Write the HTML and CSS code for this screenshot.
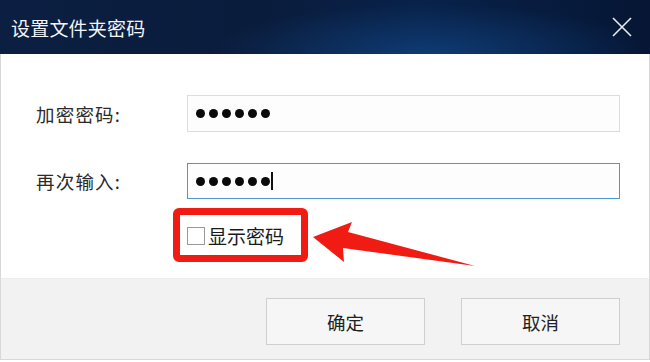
FILE: index.html
```html
<!DOCTYPE html>
<html lang="zh-CN">
<head>
<meta charset="utf-8">
<title>设置文件夹密码</title>
<link rel="stylesheet" href="styles.css">
</head>
<body>
<div class="dialog">
  <div class="titlebar">
    <span class="title">设置文件夹密码</span>
    <svg class="close" width="20" height="20" viewBox="0 0 20 20"><path d="M1 1 L19 19 M19 1 L1 19" stroke="#e8ecf2" stroke-width="1.6" fill="none"/></svg>
  </div>
  <div class="content">
    <div class="row">
      <span class="label">加密密码:</span>
      <div class="input">
        <span class="dots"><i></i><i></i><i></i><i></i><i></i><i></i></span>
      </div>
    </div>
    <div class="row">
      <span class="label">再次输入:</span>
      <div class="input focus">
        <span class="dots"><i></i><i></i><i></i><i></i><i></i><i></i></span><span class="caret"></span>
      </div>
    </div>
    <div class="check-row">
      <span class="box"></span><span class="check-text">显示密码</span>
    </div>
    <div class="highlight"></div>
    <svg class="arrow" width="170" height="50" viewBox="0 0 170 50"><polygon points="2,27 41,12 37,22 164,56 32,38 33,52" fill="#f01c14"/></svg>
  </div>
  <div class="footer">
    <div class="btn">确定</div>
    <div class="btn">取消</div>
  </div>
</div>
</body>
</html>
```
FILE: styles.css
```css
html, body { margin: 0; padding: 0; background: #ffffff; }
body { font-family: "Noto Sans CJK SC", "Noto Sans", sans-serif; }
.dialog { width: 650px; height: 362px; display: flex; flex-direction: column; overflow: hidden; }
.titlebar {
  height: 54px; flex: none; display: flex; align-items: center; justify-content: space-between;
  padding: 0 18px 0 11px; box-sizing: border-box;
  background:
    radial-gradient(ellipse 220px 50px at 430px 54px, rgba(20,80,150,0.55), rgba(20,80,150,0) 100%),
    linear-gradient(90deg, #0b1f42 0%, #0a1c3c 40%, #08224a 65%, #061634 100%);
}
.title { color: #f2f4f8; font-size: 19px; letter-spacing: 0.2px; margin-top: 1px; }
.close { margin-top: 0px; }
.content {
  position: relative; height: 224px; flex: none; box-sizing: border-box;
  border-left: 1px solid #d8d8d8; border-right: 1px solid #d8d8d8;
  padding: 41px 29px 0 35px; display: flex; flex-direction: column;
}
.row { display: flex; align-items: center; height: 37px; margin-bottom: 31px; }
.row + .row { margin-bottom: 0; height: 36px; }
.label { width: 151px; font-size: 18.5px; color: #2a2a2a; letter-spacing: 1.2px; }
.input {
  flex: 1; height: 100%; box-sizing: border-box; border: 1px solid #dcdcdc; background: #fdfdfd;
  display: flex; align-items: center; padding-left: 8px;
}
.input.focus { border-color: #4f97cf; }
.dots { display: flex; gap: 4px; }
.dots i { width: 9px; height: 9px; border-radius: 50%; background: #0a0a0a; display: block; }
.caret { width: 1.5px; height: 18px; background: #111; margin-left: 1px; }
.check-row { display: flex; align-items: center; margin-top: 27px; margin-left: 151px; }
.box { width: 16px; height: 16px; border: 1px solid #9a9a9a; background: #fff; }
.check-text { font-size: 19px; color: #1a1a1a; margin-left: 3px; line-height: 1; }
.highlight {
  position: absolute; left: 172px; top: 154px; width: 135px; height: 54px; box-sizing: border-box;
  border: 7px solid #f01c14; border-radius: 6px;
}
.arrow { position: absolute; left: 310px; top: 156px; overflow: visible; }
.footer {
  height: 82px; flex: none; box-sizing: border-box; background: #f2f2f2;
  border: 1px solid #d8d8d8; border-top: 1px solid #ececec;
  display: flex; justify-content: flex-end; align-items: flex-start; gap: 36px;
  padding: 19px 29px 0 0;
}
.btn {
  width: 159px; height: 47px; box-sizing: border-box; border: 1px solid #cfcfcf; background: #f6f6f6;
  display: flex; align-items: center; justify-content: center; font-size: 18.5px; color: #222;
}
```
